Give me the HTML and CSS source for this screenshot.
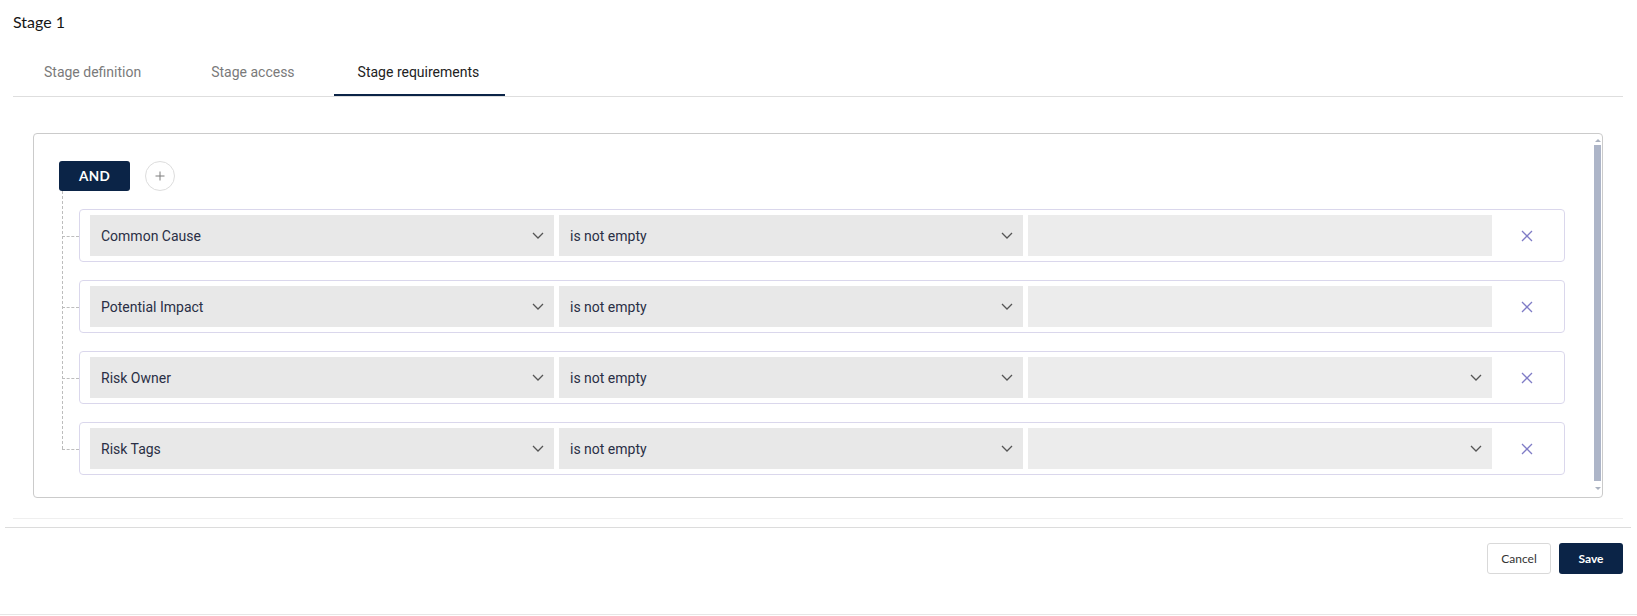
FILE: index.html
```html
<!DOCTYPE html>
<html lang="en">
<head>
<meta charset="utf-8">
<title>Stage 1</title>
<link rel="stylesheet" href="styles.css">
</head>
<body>
<div class="main">
  <h1 class="title">Stage 1</h1>
  <nav class="tabs">
    <div class="tab t1">Stage definition</div>
    <div class="tab t2">Stage access</div>
    <div class="tab t3 active">Stage requirements</div>
  </nav>
  <div class="builder">
    <div class="builder-body">
      <div class="group-head">
        <button class="and">AND</button>
        <button class="add"><svg width="10" height="10" viewBox="0 0 10 10"><path d="M5 0.5v9M0.5 5h9" stroke="#7d7d7d" stroke-width="1" fill="none"/></svg></button>
      </div>
      <div class="rules">
        <div class="rule">
          <div class="select"><span>Common Cause</span><svg class="chev" width="12" height="7" viewBox="0 0 12 7"><path d="M1 1l5 5 5-5" fill="none" stroke="#555" stroke-width="1.3"/></svg></div>
          <div class="select"><span>is not empty</span><svg class="chev" width="12" height="7" viewBox="0 0 12 7"><path d="M1 1l5 5 5-5" fill="none" stroke="#555" stroke-width="1.3"/></svg></div>
          <div class="select value"></div>
          <div class="remove"><svg width="12" height="12" viewBox="0 0 12 12"><path d="M1 1l10 10M11 1L1 11" stroke="#7f7cc6" stroke-width="1.3" fill="none"/></svg></div>
        </div>
        <div class="rule">
          <div class="select"><span>Potential Impact</span><svg class="chev" width="12" height="7" viewBox="0 0 12 7"><path d="M1 1l5 5 5-5" fill="none" stroke="#555" stroke-width="1.3"/></svg></div>
          <div class="select"><span>is not empty</span><svg class="chev" width="12" height="7" viewBox="0 0 12 7"><path d="M1 1l5 5 5-5" fill="none" stroke="#555" stroke-width="1.3"/></svg></div>
          <div class="select value"></div>
          <div class="remove"><svg width="12" height="12" viewBox="0 0 12 12"><path d="M1 1l10 10M11 1L1 11" stroke="#7f7cc6" stroke-width="1.3" fill="none"/></svg></div>
        </div>
        <div class="rule">
          <div class="select"><span>Risk Owner</span><svg class="chev" width="12" height="7" viewBox="0 0 12 7"><path d="M1 1l5 5 5-5" fill="none" stroke="#555" stroke-width="1.3"/></svg></div>
          <div class="select"><span>is not empty</span><svg class="chev" width="12" height="7" viewBox="0 0 12 7"><path d="M1 1l5 5 5-5" fill="none" stroke="#555" stroke-width="1.3"/></svg></div>
          <div class="select value"><span></span><svg class="chev" width="12" height="7" viewBox="0 0 12 7"><path d="M1 1l5 5 5-5" fill="none" stroke="#555" stroke-width="1.3"/></svg></div>
          <div class="remove"><svg width="12" height="12" viewBox="0 0 12 12"><path d="M1 1l10 10M11 1L1 11" stroke="#7f7cc6" stroke-width="1.3" fill="none"/></svg></div>
        </div>
        <div class="rule">
          <div class="select"><span>Risk Tags</span><svg class="chev" width="12" height="7" viewBox="0 0 12 7"><path d="M1 1l5 5 5-5" fill="none" stroke="#555" stroke-width="1.3"/></svg></div>
          <div class="select"><span>is not empty</span><svg class="chev" width="12" height="7" viewBox="0 0 12 7"><path d="M1 1l5 5 5-5" fill="none" stroke="#555" stroke-width="1.3"/></svg></div>
          <div class="select value"><span></span><svg class="chev" width="12" height="7" viewBox="0 0 12 7"><path d="M1 1l5 5 5-5" fill="none" stroke="#555" stroke-width="1.3"/></svg></div>
          <div class="remove"><svg width="12" height="12" viewBox="0 0 12 12"><path d="M1 1l10 10M11 1L1 11" stroke="#7f7cc6" stroke-width="1.3" fill="none"/></svg></div>
        </div>
      </div>
    </div>
    <div class="scrollbar" aria-hidden="true">
      <span class="arrow up"></span>
      <span class="thumb"></span>
      <span class="arrow down"></span>
    </div>
  </div>
</div>
<div class="footer">
  <button class="btn cancel">Cancel</button>
  <button class="btn save">Save</button>
</div>
<div class="page-end"></div>
</body>
</html>
```
FILE: styles.css
```css
html, body {
  margin: 0;
  padding: 0;
  background: #fff;
}
body {
  font-family: Roboto, "Liberation Sans", sans-serif;
  overflow: hidden;
}
.main {
  margin: 0 14px 0 13px;
  padding-bottom: 20px;
  border-bottom: 1px solid #efefef;
}
.title {
  margin: 0;
  padding-top: 12px;
  font: 400 16px/20px Lato, "Liberation Sans", sans-serif;
  color: #161616;
}
.tabs {
  display: flex;
  border-bottom: 1px solid #dedede;
  padding-left: 7px;
}
.tab {
  padding: 30px 24px 12px;
  font: 400 14px/20px Roboto, "Liberation Sans", sans-serif;
  color: #7a7a7a;
  border-bottom: 2px solid transparent;
}
.t2 { margin-left: 22px; }
.t3 { margin-left: 15px; }
.tab.active {
  color: #222;
  border-bottom-color: #0b2447;
  padding-right: 26px;
}
.builder {
  margin: 36px 20px 0;
  height: 365px;
  box-sizing: border-box;
  border: 1px solid #cbcbcb;
  border-radius: 4px;
  display: flex;
  overflow: hidden;
}
.builder-body {
  flex: 1;
  min-width: 0;
  padding: 27px 28px 22px 25px;
}
.scrollbar {
  width: 9px;
  flex: none;
  display: flex;
  flex-direction: column;
  align-items: center;
  padding-top: 5px;
}
.arrow {
  width: 0;
  height: 0;
  border-left: 3px solid transparent;
  border-right: 3px solid transparent;
}
.arrow.up {
  border-bottom: 3px solid #aab1bf;
}
.arrow.down {
  border-top: 3px solid #aab1bf;
}
.thumb {
  width: 7px;
  height: 336px;
  margin: 3px 0 6px;
  background: #adb5c8;
}
.group-head {
  display: flex;
  align-items: center;
  gap: 15px;
}
.and {
  width: 71px;
  height: 30px;
  background: #0b2447;
  color: #fff;
  border: 0;
  border-radius: 3px;
  font: 700 13.5px Lato, "Liberation Sans", sans-serif;
  letter-spacing: 0.3px;
  padding: 0;
}
.add {
  width: 30px;
  height: 30px;
  border-radius: 50%;
  border: 1px solid #dddddd;
  background: #fff;
  display: grid;
  place-items: center;
  padding: 0;
}
.add svg { display: block; }
.rules {
  position: relative;
  margin: 18px 0 0 20px;
  display: flex;
  flex-direction: column;
  gap: 18px;
}
.rules::before {
  content: "";
  position: absolute;
  left: -17px;
  top: -18px;
  bottom: 26px;
  border-left: 1px dashed #bdbdbd;
}
.rule {
  position: relative;
  display: flex;
  align-items: center;
  gap: 5px;
  padding: 5px 0 5px 10px;
  border: 1px solid #dad7ec;
  border-radius: 4px;
}
.rule::before {
  content: "";
  position: absolute;
  left: -18px;
  top: 50%;
  width: 17px;
  border-top: 1px dashed #bdbdbd;
}
.select {
  flex: 1;
  min-width: 0;
  height: 41px;
  box-sizing: border-box;
  background: #e8e8e8;
  display: flex;
  align-items: center;
  justify-content: space-between;
  padding: 0 10px 0 11px;
  font-size: 14px;
  color: #2a2f45;
}
.select.value {
  background: #ececec;
}
.chev { display: block; flex: none; }
.remove {
  width: 67px;
  box-sizing: border-box;
  padding-right: 8px;
  display: flex;
  justify-content: center;
}
.remove svg { display: block; }
.footer {
  margin: 8px 6px 0 5px;
  border-top: 1px solid #dcdcdc;
  padding: 15px 8px 40px;
  display: flex;
  justify-content: flex-end;
  gap: 8px;
}
.btn {
  width: 64px;
  height: 31px;
  border-radius: 3px;
  font: 400 12px Lato, "Liberation Sans", sans-serif;
  padding: 0;
}
.cancel {
  background: #fff;
  border: 1px solid #d9d9d9;
  color: #333;
}
.save {
  background: #0b2447;
  border: 0;
  color: #fff;
  font-weight: 700;
}
.page-end {
  border-bottom: 1px solid #e6e6e6;
}
```
